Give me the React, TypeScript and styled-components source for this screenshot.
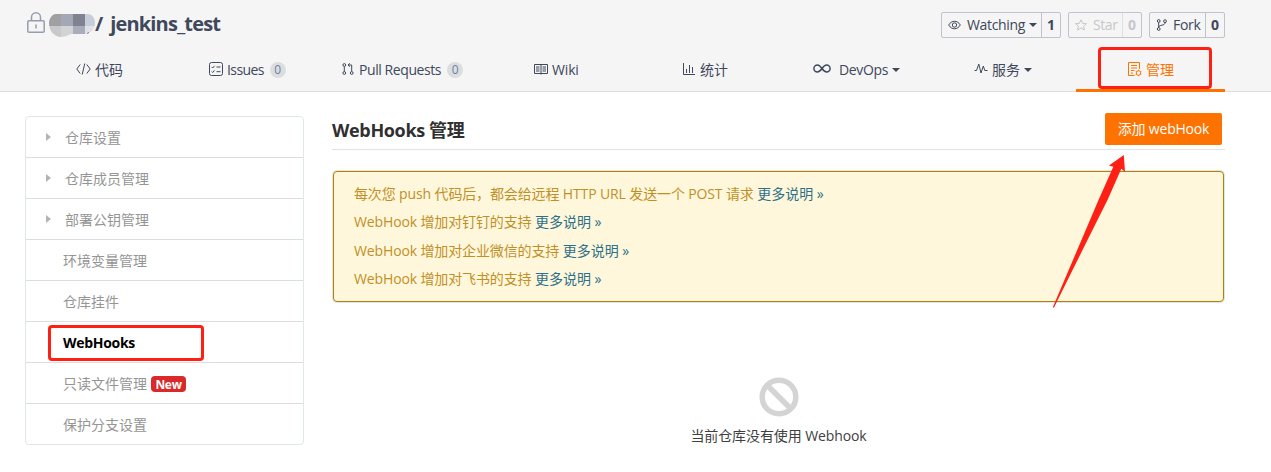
import React from 'react';
import styled, { createGlobalStyle } from 'styled-components';

const GlobalStyle = createGlobalStyle`
  * { box-sizing: border-box; }
  body {
    margin: 0;
    background: #fff;
    color: #40485b;
    font-family: "Open Sans", "Noto Sans CJK SC", sans-serif;
    font-size: 14px;
    line-height: 20px;
  }
  svg { display: block; flex: none; }
`;

const Page = styled.div`
  position: relative;
  width: 1271px;
  height: 472px;
  overflow: hidden;
`;

const Header = styled.header`
  height: 92px;
  padding-left: 25px;
  background: #f5f5f5;
  border-bottom: 1px solid #dcddde;
`;

const TitleRow = styled.div`
  display: flex;
  justify-content: space-between;
  width: 1200px;
  height: 48px;
`;

const Title = styled.h1`
  display: flex;
  align-items: flex-start;
  margin: 0;
  font-size: 20px;
  line-height: 28px;
  font-weight: 700;
  padding-top: 10px;
  white-space: pre;
`;

const LockIcon = styled.svg`
  margin: 2px 0 0 2px;
`;

const Mosaic = styled.svg`
  margin: 4px 0 0 4px;
`;

const Label = styled.span<{ $track?: number }>`
  letter-spacing: ${(p) => p.$track ?? 0}px;
  white-space: pre;
`;

const Actions = styled.div`
  display: flex;
  gap: 7px;
  padding-top: 12px;
`;

const ActionGroup = styled.div<{ $width: number; $disabled?: boolean }>`
  display: flex;
  width: ${(p) => p.$width}px;
  height: 26px;
  border: 1px solid #c0c2cc;
  border-radius: 2px;
  color: ${(p) => (p.$disabled ? '#c6c7ca' : '#40485b')};
`;

const ActionMain = styled.div`
  display: flex;
  flex: 1;
  align-items: center;
  padding-left: 6px;
`;

const ActionCount = styled.div<{ $light?: boolean }>`
  width: 19px;
  border-left: 1px solid ${(p) => (p.$light ? '#dedfe3' : '#c0c2cc')};
  text-align: center;
  font-weight: 700;
  line-height: 24px;
`;

const Caret = styled.i<{ $gap?: number }>`
  margin-left: ${(p) => p.$gap ?? 4}px;
  border: 4px solid transparent;
  border-top-color: currentColor;
  border-bottom: 0;
`;

const Tabs = styled.nav`
  display: flex;
  width: 1200px;
  height: 44px;
`;

const Tab = styled.a<{ $width: number; $start: number; $active?: boolean }>`
  display: flex;
  align-items: center;
  width: ${(p) => p.$width}px;
  padding: 2px 0 0 ${(p) => p.$start}px;
  height: 44px;
  color: ${(p) => (p.$active ? '#fe7300' : '#40485b')};
  border-bottom: 3px solid ${(p) => (p.$active ? '#fe7300' : 'transparent')};
`;

const Badge = styled.span`
  width: 16px;
  height: 16px;
  margin-left: 6px;
  border-radius: 8px;
  background: #dcddde;
  color: #6d7fae;
  font-size: 12px;
  line-height: 16px;
  text-align: center;
`;

const Body = styled.div`
  display: flex;
  gap: 28px;
  padding-left: 25px;
`;

const Sidebar = styled.ul`
  width: 279px;
  height: 329px;
  margin: 24px 0 0;
  padding: 0;
  list-style: none;
  border: 1px solid #e1e6eb;
  border-radius: 4px;
`;

const SideItem = styled.li<{ $nested?: boolean; $active?: boolean }>`
  display: flex;
  align-items: center;
  height: 41px;
  padding: 2px 0 0 ${(p) => (p.$nested ? 20 : 37)}px;
  color: ${(p) => (p.$active ? '#000' : '#959595')};
  font-weight: ${(p) => (p.$active ? 700 : 400)};
  border-bottom: 1px solid #dcddde;
  &:last-child { height: 40px; border-bottom: 0; padding-top: 1px; }
`;

const Arrow = styled.i`
  margin: -2px 14px 0 0;
  border: 4px solid transparent;
  border-left: 5px solid #b4b4b4;
  border-right: 0;
`;

const NewTag = styled.span`
  width: 35px;
  height: 16px;
  margin-left: 4px;
  border-radius: 4px;
  background: #db2828;
  color: #fff;
  font-size: 12px;
  font-weight: 700;
  line-height: 17px;
  letter-spacing: -0.3px;
  text-align: center;
`;

const Main = styled.main`
  width: 893px;
`;

const Heading = styled.div`
  display: flex;
  justify-content: space-between;
  height: 58px;
  padding: 21px 3px 0 0;
  border-bottom: 1px solid #e3e3e3;
`;

const HeadingText = styled.h2`
  margin: 3px 0 0;
  color: #303030;
  font-size: 18px;
  line-height: 28px;
  font-weight: 700;
`;

const AddButton = styled.button`
  width: 117px;
  height: 32px;
  padding: 0;
  border: 0;
  border-radius: 2px;
  background: #fe7300;
  color: #fff;
  font: inherit;
`;

const Notice = styled.section`
  height: 131px;
  margin: 21px 1px 0 1px;
  padding: 7.8px 0 0 20px;
  border: 1px solid #b58105;
  border-radius: 4px;
  box-shadow: 0 0 0 1px #dfe6e9;
  background: #fff7db;
  color: #c09027;
`;

const NoticeLine = styled.p`
  height: 28.4px;
  margin: 0;
  line-height: 28px;
  white-space: pre;
`;

const More = styled.a`
  color: #2d7089;
`;

const Empty = styled.div`
  display: flex;
  flex-direction: column;
  align-items: center;
  gap: 9px;
  padding-top: 75px;
  color: #404040;
`;

const Highlight = styled.div<{ $x: number; $y: number; $w: number; $h: number }>`
  position: absolute;
  left: ${(p) => p.$x}px;
  top: ${(p) => p.$y}px;
  width: ${(p) => p.$w}px;
  height: ${(p) => p.$h}px;
  border: 3px solid #ff2015;
  border-radius: 4px;
`;

const Pointer = styled.svg`
  position: absolute;
  left: 1050px;
  top: 152px;
`;

type IconProps = { w: number; h: number; shift?: number; gap?: number; children: React.ReactNode; sw?: number };

const Glyph = styled.svg<{ $shift: number; $gap: number }>`
  margin-right: ${(p) => p.$gap}px;
  transform: translateY(${(p) => p.$shift}px);
`;

const Icon = ({ w, h, shift = 0, gap = 4, sw = 1, children }: IconProps) => (
  <Glyph width={w} height={h} viewBox={`0 0 ${w} ${h}`} fill="none" stroke="currentColor" strokeWidth={sw} $shift={shift} $gap={gap}>
    {children}
  </Glyph>
);

const notices = [
  '每次您 push 代码后，都会给远程 HTTP URL 发送一个 POST 请求 ',
  'WebHook 增加对钉钉的支持 ',
  'WebHook 增加对企业微信的支持 ',
  'WebHook 增加对飞书的支持 ',
];

export default function App() {
  return (
    <Page>
      <GlobalStyle />
      <Header>
        <TitleRow>
          <Title>
            <LockIcon width="18" height="21" viewBox="0 0 18 21" fill="none" stroke="#969eae" strokeWidth="1.5">
              <rect x="0.8" y="8.8" width="16.4" height="11.4" rx="1.2" />
              <path d="M4.5 8.5V5.3a4.5 4.5 0 0 1 9 0v3.2M9 12.5v4" />
            </LockIcon>
            <Mosaic width="46" height="23" viewBox="0 0 46 23">
              <clipPath id="pill"><path d="M7 0H39C43 0 46 4 46 9C46 15 43 18 37 20H22C18 22 15 23 11 23C5 22 0 17 0 9C0 5 3 0 7 0Z" /></clipPath>
              <g clipPath="url(#pill)">
                <rect width="12" height="12" fill="#a0a0a2" />
                <rect x="12" width="12" height="12" fill="#a4a8b6" />
                <rect x="24" width="12" height="12" fill="#80838f" />
                <rect x="36" width="10" height="12" fill="#c8ced9" />
                <rect y="12" width="12" height="11" fill="#c8c9cb" />
                <rect x="12" y="12" width="12" height="11" fill="#d2d3d6" />
                <rect x="24" y="12" width="12" height="11" fill="#a9adbb" />
                <rect x="36" y="12" width="10" height="11" fill="#dfe2e8" />
              </g>
              <path d="M39.5 18L38.5 20" stroke="#7a8090" />
            </Mosaic>
            <Label $track={0.9}>/ </Label>
            <Label $track={-0.85}>jenkins_test</Label>
          </Title>
          <Actions>
            <ActionGroup $width={120}>
              <ActionMain>
                <Icon w={13} h={10} gap={6}>
                  <path d="M0.7 5C3.5 0 9.5 0 12.3 5C9.5 10 3.5 10 0.7 5Z" />
                  <circle cx="6.5" cy="5" r="2.2" />
                </Icon>
                <Label $track={-0.35}>Watching</Label>
                <Caret />
              </ActionMain>
              <ActionCount>1</ActionCount>
            </ActionGroup>
            <ActionGroup $width={74} $disabled>
              <ActionMain>
                <Icon w={12} h={12} gap={6}>
                  <path d="M6 0.8L7.6 4.3L11.4 4.7L8.6 7.2L9.4 11L6 9L2.6 11L3.4 7.2L0.6 4.7L4.4 4.3Z" />
                </Icon>
                <Label $track={-0.4}>Star</Label>
              </ActionMain>
              <ActionCount $light>0</ActionCount>
            </ActionGroup>
            <ActionGroup $width={76}>
              <ActionMain>
                <Icon w={12} h={12} gap={5}>
                  <circle cx="2.7" cy="2" r="1.4" /><circle cx="9" cy="2.2" r="1.4" /><circle cx="2.7" cy="10" r="1.4" />
                  <path d="M2.7 3.5v5M9 3.7C9 7 3 5.5 2.7 8.3" />
                </Icon>
                <Label $track={-0.3}>Fork</Label>
              </ActionMain>
              <ActionCount>0</ActionCount>
            </ActionGroup>
          </Actions>
        </TitleRow>
        <Tabs>
          <Tab $width={150} $start={51}>
            <Icon w={15} h={12} shift={-1}><path d="M4.2 1.5L0.8 6L4.2 10.5M10.8 1.5L14.2 6L10.8 10.5M8.8 0.5L6.2 11.5" /></Icon>
            <Label>代码</Label>
          </Tab>
          <Tab $width={145} $start={34}>
            <Icon w={14} h={14} shift={-1}>
              <rect x="0.5" y="0.5" width="13" height="13" rx="2" />
              <path d="M2.7 5l1 1L5.5 3.8M2.7 9.5l1 1L5.5 8.3M7.5 5h4M7.5 9.7h4" />
            </Icon>
            <Label $track={-0.6}>Issues</Label>
            <Badge>0</Badge>
          </Tab>
          <Tab $width={163} $start={22}>
            <Icon w={12} h={12} gap={5} shift={-1}>
              <circle cx="2.3" cy="2" r="1.4" /><circle cx="2.3" cy="10" r="1.4" /><circle cx="9.7" cy="10" r="1.4" />
              <path d="M2.3 3.5v5M9.7 8.5V2H6M7.8 0.3L6 2l1.8 1.7" />
            </Icon>
            <Label $track={-0.42}>Pull Requests</Label>
            <Badge>0</Badge>
          </Tab>
          <Tab $width={146} $start={51}>
            <Icon w={14} h={11}>
              <path d="M0.5 0.5H13.5V9.5H0.5ZM7 0.5V10.5M2 3h3.5M2 5h3.5M2 7h3.5M8.5 3H12M8.5 5H12M8.5 7H12" />
            </Icon>
            <Label $track={-0.15}>Wiki</Label>
          </Tab>
          <Tab $width={152} $start={54}>
            <Icon w={12} h={12} shift={-1} gap={5}><path d="M0.5 0V11.5H12M3.5 6v4M6.5 2v8M9.5 4v6" /></Icon>
            <Label>统计</Label>
          </Tab>
          <Tab $width={150} $start={32}>
            <Icon w={18} h={9} shift={-1} gap={8} sw={1.5}>
              <path d="M9 4.5C7.5 2.3 6.3 1 4.4 1a3.5 3.5 0 0 0 0 7C6.3 8 7.5 6.7 9 4.5C10.5 2.3 11.7 1 13.6 1a3.5 3.5 0 0 1 0 7C11.7 8 10.5 6.7 9 4.5Z" />
            </Icon>
            <Label $track={-0.35}>DevOps</Label>
            <Caret />
          </Tab>
          <Tab $width={145} $start={43}>
            <Icon w={14} h={11} shift={-1}><path d="M0.5 7.5H2.5L4.8 1L7 10L9.3 3L10.8 7.5H13.5" /></Icon>
            <Label>服务</Label>
            <Caret />
          </Tab>
          <Tab $width={149} $start={52} $active>
            <Icon w={14} h={15}>
              <path d="M6.5 13.5H0.5V0.5H11.5V7M3 3.5H9M3 6H9M3 8.5H6.5M3 11H5" />
              <circle cx="10.5" cy="11" r="2.3" />
              <path d="M10.5 7.8v1M10.5 13.2v1M7.7 9.4l.9.5M12.4 12.1l.9.5M13.3 9.4l-.9.5M8.6 12.1l-.9.5" />
            </Icon>
            <Label>管理</Label>
          </Tab>
        </Tabs>
      </Header>
      <Body>
        <Sidebar>
          {['仓库设置', '仓库成员管理', '部署公钥管理'].map((t) => (
            <SideItem key={t} $nested><Arrow />{t}</SideItem>
          ))}
          <SideItem>环境变量管理</SideItem>
          <SideItem>仓库挂件</SideItem>
          <SideItem $active><Label $track={-0.3}>WebHooks</Label></SideItem>
          <SideItem>只读文件管理<NewTag>New</NewTag></SideItem>
          <SideItem>保护分支设置</SideItem>
        </Sidebar>
        <Main>
          <Heading>
            <HeadingText><Label $track={-0.35}>WebHooks 管理</Label></HeadingText>
            <AddButton><Label $track={-0.2}>添加 webHook</Label></AddButton>
          </Heading>
          <Notice>
            {notices.map((text) => (
              <NoticeLine key={text}>
                <Label $track={-0.13}>{text}</Label>
                <More>更多说明 »</More>
              </NoticeLine>
            ))}
          </Notice>
          <Empty>
            <svg width="40" height="40" viewBox="0 0 40 40" fill="none" stroke="#d4d4d4" strokeWidth="5.5">
              <circle cx="20" cy="20" r="16.8" />
              <path d="M8.5 8.5L31.5 31.5" />
            </svg>
            <Label $track={-0.1}>当前仓库没有使用 Webhook</Label>
          </Empty>
        </Main>
      </Body>
      <Highlight $x={1098} $y={47} $w={114} $h={42} />
      <Highlight $x={48} $y={325} $w={156} $h={36} />
      <Pointer width="80" height="160" viewBox="0 0 80 160">
        <path d="M2.7 155.5L28.5 95L48.5 48L63.3 14.7L59 13.5L73.8 3L75 19.8L71.3 16.8L57.5 48L34 95L4 155.5Z" fill="#ff2015" />
      </Pointer>
    </Page>
  );
}
